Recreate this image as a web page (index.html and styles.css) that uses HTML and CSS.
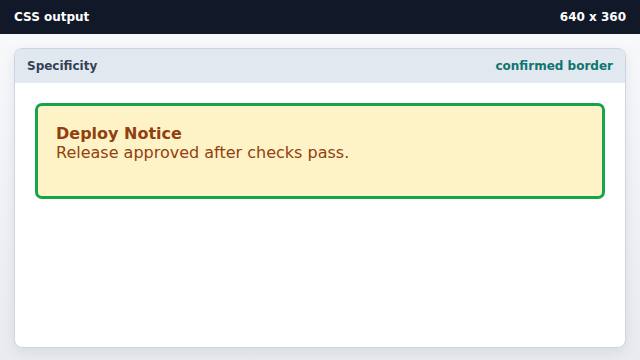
FILE: index.html
```html
<!DOCTYPE html>
<html>
<head>
<meta charset="utf-8">
<link rel="stylesheet" href="styles.css">
</head>
<body>
<div class="topbar">
  <span>CSS output</span>
  <span>640 x 360</span>
</div>
<main class="stage">
  <section class="panel">
    <header class="panel-head">
      <span class="panel-title">Specificity</span>
      <span class="panel-status">confirmed border</span>
    </header>
    <div class="panel-body">
      <div class="notice">
        <div class="notice-title">Deploy Notice</div>
        <div class="notice-text">Release approved after checks pass.</div>
      </div>
    </div>
  </section>
</main>
</body>
</html>
```
FILE: styles.css
```css
* { box-sizing: border-box; }
html, body { margin: 0; height: 100%; }
body {
  font-family: "DejaVu Sans", sans-serif;
  display: flex;
  flex-direction: column;
  background: linear-gradient(180deg, #f8fafc 0%, #e9ebef 100%);
}
.topbar {
  height: 34px;
  flex: none;
  background: #111827;
  color: #ffffff;
  font-weight: bold;
  font-size: 12px;
  line-height: 14px;
  display: flex;
  align-items: center;
  justify-content: space-between;
  padding: 0 14px 1px;
}
.stage {
  flex: 1;
  padding: 14px 14px 12px;
  display: flex;
}
.panel {
  flex: 1;
  background: #ffffff;
  border: 1px solid #cbd5e1;
  border-radius: 8px;
  overflow: hidden;
  box-shadow: 0 4px 14px rgba(15, 23, 42, 0.08);
  display: flex;
  flex-direction: column;
}
.panel-head {
  height: 34px;
  background: #e2e8f0;
  display: flex;
  align-items: center;
  justify-content: space-between;
  padding: 0 12px 1px;
  font-size: 12px;
  line-height: 14px;
  font-weight: bold;
}
.panel-title { color: #334155; }
.panel-status { color: #0f766e; }
.panel-body {
  padding: 20px;
}
.notice {
  height: 96px;
  background: #fef3c7;
  border: 3px solid #16a34a;
  border-radius: 7px;
  padding: 18px 18px 16px;
  color: #92400e;
  font-size: 16px;
  line-height: 19px;
}
.notice-title { font-weight: bold; }
```
